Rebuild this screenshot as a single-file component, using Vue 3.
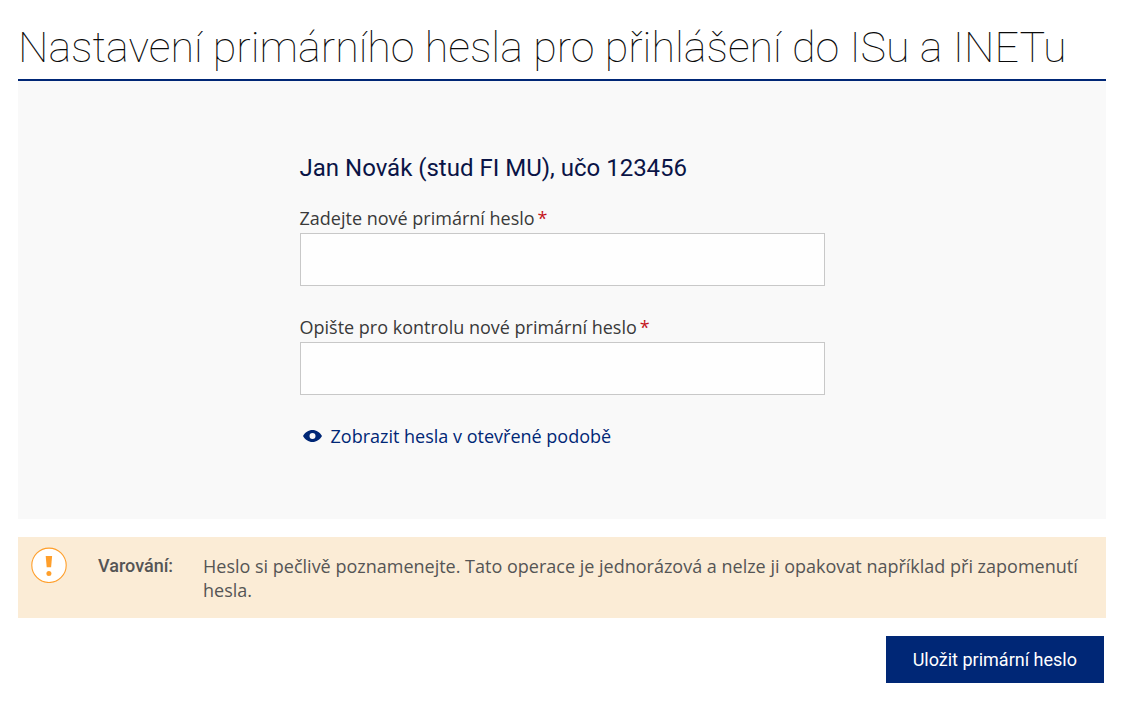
<script setup>
import { ref } from 'vue'

const visible = ref(false)
const fields = [
  { id: 'heslo', label: 'Zadejte nové primární heslo' },
  { id: 'heslo-kontrola', label: 'Opište pro kontrolu nové primární heslo' },
]
</script>

<template>
  <main class="page">
    <h1>Nastavení primárního hesla pro přihlášení do ISu a INETu</h1>
    <form @submit.prevent>
      <section class="panel">
        <div class="fields">
          <h2>Jan Novák (stud FI MU), učo 123456</h2>
          <div v-for="f in fields" :key="f.id" class="field">
            <label :for="f.id">{{ f.label }}<span class="star">*</span></label>
            <input :id="f.id" :type="visible ? 'text' : 'password'" required />
          </div>
          <a class="reveal" href="#" @click.prevent="visible = !visible">
            <svg width="19" height="12" viewBox="0 0 19 12" aria-hidden="true">
              <path fill="#002776" fill-rule="evenodd" d="M0 6C2 2.500 5.500 0 9.500 0S17 2.500 19 6C17 9.500 13.500 12 9.500 12S2 9.500 0 6ZM9.500 3a3 3 0 1 0 0 6a3 3 0 0 0 0-6Z" />
            </svg>
            <span>Zobrazit hesla v otevřené podobě</span>
          </a>
        </div>
      </section>
      <section class="warning">
        <svg class="badge" width="36" height="36" viewBox="0 0 36 36" aria-hidden="true">
          <circle cx="18" cy="18.300" r="17.200" fill="#fff" stroke="#ff9f2b" stroke-width="1.100" />
          <path fill="#ff9f2b" d="M14.700 9h6.400l-1 11.300h-4.400Z" />
          <circle cx="17.900" cy="26.400" r="2.500" fill="#ff9f2b" />
        </svg>
        <strong>Varování:</strong>
        <p>Heslo si pečlivě poznamenejte. Tato operace je jednorázová a nelze ji opakovat například při zapomenutí hesla.</p>
      </section>
      <div class="actions"><button type="submit">Uložit primární heslo</button></div>
    </form>
  </main>
</template>

<style>
body {
  margin: 0;
  background: #fff;
}
</style>

<style scoped>
.page {
  padding: 18px 17px 24px 18px;
  font-family: "Open Sans", sans-serif;
  font-size: 18px;
  line-height: 24px;
  color: #3a3a3a;
}
h1 {
  margin: 0;
  padding-bottom: 3px;
  border-bottom: 2px solid #002776;
  font: 100 43px/58px Roboto, sans-serif;
  color: #0a0a0a;
}
.panel {
  padding: 70px 20px 71px;
  background: #f9f9f9;
}
.fields {
  max-width: 525px;
  margin: 0 auto;
}
h2 {
  margin: 0 0 21px;
  font: 400 24px/34px Roboto, sans-serif;
  color: #0a1446;
}
.field {
  margin-bottom: 29px;
}
label {
  display: block;
  margin-bottom: 3px;
}
.star {
  margin-left: 3px;
  color: #c4141c;
}
input {
  display: block;
  box-sizing: border-box;
  width: 100%;
  height: 53px;
  padding: 0 12px;
  border: 1px solid #c8c8c8;
  background: #fefefe;
  font: inherit;
}
.reveal {
  display: flex;
  align-items: center;
  gap: 9px;
  padding-left: 3px;
  color: #002776;
  text-decoration: none;
}
.warning {
  display: flex;
  margin-top: 18px;
  padding: 10px 13px 16px;
  background: #fbecd6;
  color: #555;
}
.badge {
  flex: none;
}
strong {
  flex: none;
  width: 105px;
  margin: 7px 0 0 31px;
  font: 500 18px/24px Roboto, sans-serif;
}
p {
  margin: 7px 0 0;
}
.actions {
  display: flex;
  justify-content: flex-end;
  padding: 18px 2px 0 0;
}
button {
  padding: 0 27px;
  height: 47px;
  border: 0;
  background: #002776;
  color: #fff;
  font: 400 18px/24px Roboto, sans-serif;
}
</style>
